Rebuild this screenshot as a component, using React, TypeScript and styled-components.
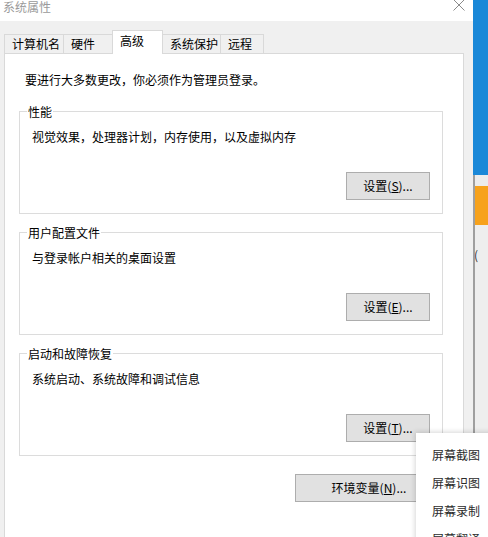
import React from "react";
import styled, { createGlobalStyle } from "styled-components";

const Global = createGlobalStyle`
  html, body { margin: 0; padding: 0; background: #f0f0f0; overflow: hidden; }
  body {
    font-family: "Noto Sans CJK SC", "Microsoft YaHei UI", sans-serif;
    font-size: 12px;
    color: #000;
  }
  * { box-sizing: border-box; }
`;

const Screen = styled.div`
  position: relative;
  width: 488px;
  height: 537px;
  display: flex;
  overflow: hidden;
`;

const Dialog = styled.div`
  width: 473px;
  height: 537px;
  display: flex;
  flex-direction: column;
  background: #f0f0f0;
`;

const TitleBar = styled.div`
  height: 21px;
  flex: none;
  background: #fff;
  display: flex;
  justify-content: space-between;
  align-items: flex-start;
  padding-left: 3px;
`;

const Title = styled.div`
  color: #9a9a9a;
  font-size: 12px;
  line-height: 14px;
`;

const CloseIcon = styled.svg`
  margin: -1px 8px 0 0;
  flex: none;
`;

const Body = styled.div`
  flex: 1;
  display: flex;
  flex-direction: column;
  padding-top: 9px;
  min-height: 0;
`;

const TabRow = styled.div`
  display: flex;
  align-items: flex-start;
  height: 24px;
  padding-left: 4px;
  margin-bottom: -1px;
  position: relative;
  z-index: 1;
  flex: none;
`;

const Tab = styled.div<{ $w: number; $active?: boolean }>`
  width: ${(p) => p.$w}px;
  height: ${(p) => (p.$active ? 24 : 19)}px;
  margin-top: ${(p) => (p.$active ? 0 : 4)}px;
  margin-right: -1px;
  padding: ${(p) => (p.$active ? "2px 0 0 7px" : "1px 0 0 7px")};
  border: 1px solid #d9d9d9;
  border-bottom: none;
  background: ${(p) => (p.$active ? "#fff" : "#f0f0f0")};
  line-height: 16px;
  white-space: nowrap;
  position: relative;
  z-index: ${(p) => (p.$active ? 2 : 1)};
`;

const Panel = styled.div`
  flex: 1;
  margin-left: 4px;
  width: 460px;
  background: #fff;
  border: 1px solid #d9d9d9;
  border-bottom: none;
  padding: 18px 20px 0 14px;
  display: flex;
  flex-direction: column;
`;

const Intro = styled.div`
  margin-left: 6px;
  line-height: 16px;
`;

const Group = styled.div<{ $first?: boolean }>`
  position: relative;
  width: 424px;
  height: 103px;
  flex: none;
  margin-top: ${(p) => (p.$first ? 23 : 18)}px;
  border: 1px solid #dcdcdc;
  padding: 17px 12px 0 12px;
  display: flex;
  flex-direction: column;
`;

const Legend = styled.div`
  position: absolute;
  top: -8px;
  left: 7px;
  padding: 0 1px;
  background: #fff;
  line-height: 16px;
`;

const GroupText = styled.div`
  line-height: 16px;
`;

const Button = styled.button<{ $w?: number }>`
  width: ${(p) => p.$w ?? 84}px;
  height: 28px;
  padding: 0;
  background: #e1e1e1;
  border: 1px solid #adadad;
  border-radius: 0;
  font: inherit;
  font-size: 12px;
  color: #000;
  line-height: 16px;
  align-self: flex-end;
  flex: none;
`;

const GroupButton = styled(Button)`
  margin-top: 27px;
`;

const EnvButton = styled(Button)`
  margin-top: 18px;
`;

const Backdrop = styled.div`
  width: 15px;
  display: flex;
  flex-direction: column;
`;

const Strip = styled.div<{ $h?: number; $c: string; $edge?: boolean }>`
  height: ${(p) => (p.$h ? `${p.$h}px` : "auto")};
  flex: ${(p) => (p.$h ? "none" : "1")};
  background: ${(p) => p.$c};
  border-left: ${(p) => (p.$edge ? "2px solid #9f9f9f" : "none")};
  font-size: 12px;
  line-height: 16px;
  color: #333;
  overflow: hidden;
`;

const StripGlyph = styled.div`
  margin-top: 22px;
  margin-left: -1px;
`;

const Menu = styled.div`
  position: absolute;
  left: 416px;
  top: 433px;
  width: 90px;
  height: 130px;
  background: #fff;
  box-shadow: -1px -1px 5px rgba(0, 0, 0, 0.16);
  padding-top: 8px;
  z-index: 5;
`;

const MenuItem = styled.div`
  height: 28px;
  line-height: 28px;
  padding-left: 16px;
  color: #2b2b2b;
  white-space: nowrap;
`;

export default function App() {
  return (
    <>
      <Global />
      <Screen>
        <Dialog>
          <TitleBar>
            <Title>系统属性</Title>
            <CloseIcon width="12" height="12" viewBox="0 0 12 12">
              <path d="M0.5 0.5 L11.5 11.5 M11.5 0.5 L0.5 11.5" stroke="#8a8a8a" strokeWidth="1" fill="none" />
            </CloseIcon>
          </TitleBar>
          <Body>
            <TabRow>
              <Tab $w={60}>计算机名</Tab>
              <Tab $w={50}>硬件</Tab>
              <Tab $w={51} $active>
                高级
              </Tab>
              <Tab $w={59}>系统保护</Tab>
              <Tab $w={44}>远程</Tab>
            </TabRow>
            <Panel>
              <Intro>要进行大多数更改，你必须作为管理员登录。</Intro>
              <Group $first>
                <Legend>性能</Legend>
                <GroupText>视觉效果，处理器计划，内存使用，以及虚拟内存</GroupText>
                <GroupButton>
                  设置(<u>S</u>)...
                </GroupButton>
              </Group>
              <Group>
                <Legend>用户配置文件</Legend>
                <GroupText>与登录帐户相关的桌面设置</GroupText>
                <GroupButton>
                  设置(<u>E</u>)...
                </GroupButton>
              </Group>
              <Group>
                <Legend>启动和故障恢复</Legend>
                <GroupText>系统启动、系统故障和调试信息</GroupText>
                <GroupButton>
                  设置(<u>T</u>)...
                </GroupButton>
              </Group>
              <EnvButton $w={148}>
                环境变量(<u>N</u>)...
              </EnvButton>
            </Panel>
          </Body>
        </Dialog>
        <Backdrop>
          <Strip $h={175} $c="#1a88d8" />
          <Strip $h={11} $c="#ececec" $edge />
          <Strip $h={39} $c="#f7a21c" $edge />
          <Strip $c="#eeeeee" $edge>
            <StripGlyph>(</StripGlyph>
          </Strip>
        </Backdrop>
        <Menu>
          <MenuItem>屏幕截图</MenuItem>
          <MenuItem>屏幕识图</MenuItem>
          <MenuItem>屏幕录制</MenuItem>
          <MenuItem>屏幕翻译</MenuItem>
        </Menu>
      </Screen>
    </>
  );
}
